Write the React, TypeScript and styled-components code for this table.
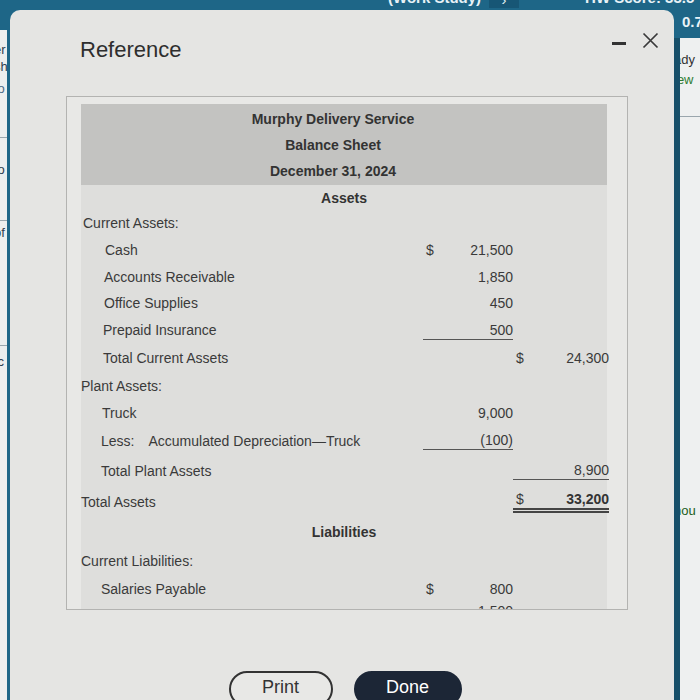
import React from "react";
import styled, { createGlobalStyle } from "styled-components";

const GlobalStyle = createGlobalStyle`
  html, body { margin: 0; padding: 0; }
  body {
    background: #1e6687;
    font-family: "Liberation Sans", Arial, Helvetica, sans-serif;
    overflow: hidden;
  }
`;

const Page = styled.div`
  width: 700px;
  height: 700px;
  display: flex;
  flex-direction: column;
  overflow: hidden;
  background: #1e6687;
`;

const TopBar = styled.div`
  height: 10px;
  display: flex;
  align-items: flex-start;
  overflow: hidden;
  flex-shrink: 0;
`;

const TopText = styled.span<{ $ml: number }>`
  margin-left: ${(p) => p.$ml}px;
  margin-top: -10px;
  font-size: 15px;
  line-height: 16px;
  font-weight: bold;
  color: #e8f2f7;
  white-space: nowrap;
`;

const TopChevron = styled.span`
  margin-left: 8px;
  margin-top: -8px;
  width: 30px;
  height: 16px;
  background: #175675;
  color: #e8f2f7;
  font-size: 15px;
  line-height: 16px;
  text-align: center;
`;

const Main = styled.div`
  flex: 1;
  min-height: 0;
  display: flex;
`;

const LeftStrip = styled.div`
  width: 7px;
  margin-top: 20px;
  margin-right: 3px;
  background: #eceeee;
  overflow: hidden;
  font-size: 13px;
  color: #2f3f4f;
  display: flex;
  flex-direction: column;
`;

const StripText = styled.div<{ $mt: number; $color?: string }>`
  margin-top: ${(p) => p.$mt}px;
  margin-left: -6px;
  line-height: 16px;
  white-space: nowrap;
  color: ${(p) => p.$color ?? "inherit"};
`;

const StripRule = styled.div<{ $mt: number }>`
  margin-top: ${(p) => p.$mt}px;
  border-top: 1px solid #9aa6ad;
`;

const Dialog = styled.div`
  width: 664px;
  background: #e5e5e3;
  border-radius: 10px 10px 0 0;
  display: flex;
  flex-direction: column;
  flex-shrink: 0;
  overflow: hidden;
`;

const TitleRow = styled.div`
  display: flex;
  align-items: center;
  padding: 28px 15px 0 70px;
  height: 24px;
  flex-shrink: 0;
`;

const Title = styled.h1`
  margin: 0;
  flex: 1;
  font-size: 22px;
  line-height: 24px;
  font-weight: normal;
  color: #2e2e2e;
`;

const MinimizeBtn = styled.div`
  width: 14px;
  height: 3px;
  background: #333;
  margin-right: 16px;
  margin-top: -14px;
`;

const CloseBtn = styled.svg`
  width: 17px;
  height: 17px;
  margin-top: -20px;
`;

const Box = styled.div`
  margin: 34px 46px 0 56px;
  height: 514px;
  flex-shrink: 0;
  box-sizing: border-box;
  border: 1px solid #b3b3b1;
  background: #e8e8e6;
  padding: 7px 20px 0 14px;
  overflow: hidden;
`;

const Sheet = styled.div`
  background: #dededc;
  color: #3a3a3a;
  font-size: 14px;
`;

const Band = styled.div`
  background: #c3c3c1;
  padding: 2px 22px 1px 0;
`;

const BandLine = styled.div`
  height: 26px;
  line-height: 26px;
  text-align: center;
  font-weight: bold;
  color: #333;
`;

const SectionTitle = styled.div<{ $h: number }>`
  height: ${(p) => p.$h}px;
  display: flex;
  align-items: center;
  justify-content: center;
  font-weight: bold;
  color: #333;
`;

const Row = styled.div<{ $h?: number; $top?: boolean }>`
  display: grid;
  grid-template-columns: 342px 18px 72px 22px 74px;
  height: ${(p) => p.$h ?? 27}px;
  align-items: ${(p) => (p.$top ? "start" : "center")};
`;

const Label = styled.div<{ $indent?: number }>`
  padding-left: ${(p) => p.$indent ?? 0}px;
  white-space: nowrap;
`;

const Gap = styled.span`
  margin-left: 14px;
`;

type Rule = "single" | "double" | undefined;

const Cell = styled.div<{ $rule?: Rule; $bold?: boolean; $right?: boolean }>`
  height: 18px;
  line-height: 18px;
  white-space: nowrap;
  text-align: ${(p) => (p.$right ? "right" : "left")};
  padding-left: ${(p) => (p.$right ? 0 : 3)}px;
  font-weight: ${(p) => (p.$bold ? "bold" : "normal")};
  color: ${(p) => (p.$bold ? "#333" : "#3a3a3a")};
  border-bottom: ${(p) =>
    p.$rule === "single"
      ? "1px solid #555"
      : p.$rule === "double"
      ? "5px double #444"
      : "none"};
`;

const ButtonRow = styled.div`
  display: flex;
  justify-content: center;
  gap: 21px;
  margin-top: 61px;
  padding-left: 6px;
  flex-shrink: 0;
`;

const Button = styled.button<{ $primary?: boolean }>`
  height: 36px;
  width: ${(p) => (p.$primary ? 108 : 104)}px;
  border-radius: 18px;
  font-family: inherit;
  font-size: 18px;
  box-sizing: border-box;
  border: 2px solid ${(p) => (p.$primary ? "#1c2636" : "#333")};
  background: ${(p) => (p.$primary ? "#1c2636" : "#e8e8e6")};
  color: ${(p) => (p.$primary ? "#fff" : "#333")};
  padding: 0 0 4px;
`;

const RightSide = styled.div`
  width: 26px;
  display: flex;
  flex-direction: column;
  overflow: hidden;
`;

const RightTop = styled.div`
  height: 28px;
  padding-left: 8px;
  font-size: 15px;
  font-weight: bold;
  line-height: 16px;
  color: #e8f2f7;
  box-sizing: border-box;
  padding-top: 4px;
  white-space: nowrap;
`;

const RightPanel = styled.div`
  flex: 1;
  background: #eef0f0;
  border-left: 6px solid #174f69;
  font-size: 13px;
  color: #333;
  overflow: hidden;
  display: flex;
  flex-direction: column;
`;

type Amt = { d?: boolean; v?: string; rule?: Rule; bold?: boolean };

function Line({
  label,
  indent,
  h,
  top,
  c1,
  c2,
}: {
  label?: React.ReactNode;
  indent?: number;
  h?: number;
  top?: boolean;
  c1?: Amt;
  c2?: Amt;
}) {
  return (
    <Row $h={h} $top={top}>
      <Label $indent={indent}>{label}</Label>
      {c1 ? (
        <>
          <Cell $rule={c1.rule}>{c1.d ? "$" : ""}</Cell>
          <Cell $right $rule={c1.rule} $bold={c1.bold}>
            {c1.v}
          </Cell>
        </>
      ) : (
        <>
          <div />
          <div />
        </>
      )}
      {c2 ? (
        <>
          <Cell $rule={c2.rule}>{c2.d ? "$" : ""}</Cell>
          <Cell $right $rule={c2.rule} $bold={c2.bold}>
            {c2.v}
          </Cell>
        </>
      ) : (
        <>
          <div />
          <div />
        </>
      )}
    </Row>
  );
}

export default function App() {
  return (
    <>
      <GlobalStyle />
      <Page>
        <TopBar>
          <TopText $ml={388}>(Work Study)</TopText>
          <TopChevron>›</TopChevron>
          <TopText $ml={66}>HW Score: 33.5</TopText>
        </TopBar>
        <Main>
          <LeftStrip>
            <StripText $mt={12}>er</StripText>
            <StripText $mt={1}>sh</StripText>
            <StripText $mt={6} $color="#4d6b86">to</StripText>
            <StripRule $mt={40} />
            <StripText $mt={24}>fo</StripText>
            <StripRule $mt={42} />
            <StripText $mt={4}>of</StripText>
            <StripRule $mt={104} />
            <StripText $mt={8}>tc</StripText>
          </LeftStrip>
          <Dialog>
            <TitleRow>
              <Title>Reference</Title>
              <MinimizeBtn />
              <CloseBtn viewBox="0 0 17 17">
                <path d="M1.5 1.5 L15.5 15.5 M15.5 1.5 L1.5 15.5" stroke="#3a3a3a" strokeWidth="1.7" fill="none" />
              </CloseBtn>
            </TitleRow>
            <Box>
              <Sheet>
                <Band>
                  <BandLine>Murphy Delivery Service</BandLine>
                  <BandLine>Balance Sheet</BandLine>
                  <BandLine>December 31, 2024</BandLine>
                </Band>
                <SectionTitle $h={25}>Assets</SectionTitle>
                <Line label="Current Assets:" indent={2} h={26} />
                <Line label="Cash" indent={24} c1={{ d: true, v: "21,500" }} />
                <Line label="Accounts Receivable" indent={23} c1={{ v: "1,850" }} />
                <Line label="Office Supplies" indent={23} h={26} c1={{ v: "450" }} />
                <Line label="Prepaid Insurance" indent={22} h={28} c1={{ v: "500", rule: "single" }} />
                <Line label="Total Current Assets" indent={22} h={28} c2={{ d: true, v: "24,300" }} />
                <Line label="Plant Assets:" indent={0} />
                <Line label="Truck" indent={21} c1={{ v: "9,000" }} />
                <Line
                  label={
                    <>
                      Less:<Gap>Accumulated Depreciation—Truck</Gap>
                    </>
                  }
                  indent={20}
                  h={29}
                  c1={{ v: "(100)", rule: "single" }}
                />
                <Line label="Total Plant Assets" indent={20} h={31} c2={{ v: "8,900", rule: "single" }} />
                <Line label="Total Assets" indent={0} h={31} c2={{ d: true, v: "33,200", rule: "double", bold: true }} />
                <SectionTitle $h={30}>Liabilities</SectionTitle>
                <Line label="Current Liabilities:" indent={0} h={28} />
                <Line label="Salaries Payable" indent={20} c1={{ d: true, v: "800" }} />
                <Line indent={20} top c1={{ v: "1,500" }} />
              </Sheet>
            </Box>
            <ButtonRow>
              <Button>Print</Button>
              <Button $primary>Done</Button>
            </ButtonRow>
          </Dialog>
          <RightSide>
            <RightTop>0.7</RightTop>
            <RightPanel>
              <StripText $mt={14}>ady</StripText>
              <StripText $mt={4} $color="#2e7d32">iew</StripText>
              <StripText $mt={-4}>.</StripText>
              <StripRule $mt={16} />
              <StripText $mt={386} $color="#1b5e20">hou</StripText>
            </RightPanel>
          </RightSide>
        </Main>
      </Page>
    </>
  );
}
